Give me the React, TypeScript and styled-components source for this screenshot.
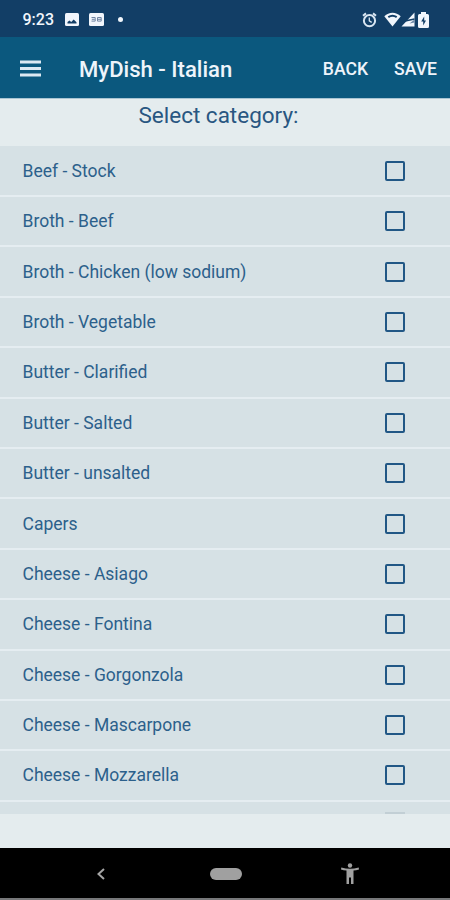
import React from 'react';
import styled, { createGlobalStyle } from 'styled-components';

const GlobalStyle = createGlobalStyle`
  * { box-sizing: border-box; }
  html, body { margin: 0; padding: 0; }
  body { font-family: Roboto, sans-serif; background: #e4ecef; overflow: hidden; }
`;

const Screen = styled.div`
  width: 450px;
  height: 900px;
  display: flex;
  flex-direction: column;
  background: #e4ecee;
  overflow: hidden;
`;

const StatusBar = styled.header`
  flex: 0 0 37px;
  display: flex;
  align-items: center;
  padding: 2px 21px 0 22.5px;
  background: #123e66;
  color: #f1f6fc;
`;

const Clock = styled.span`
  width: 42.5px;
  font-size: 16px;
  font-weight: 500;
  line-height: 20px;
`;

const StatusIcons = styled.div<{ $end?: boolean }>`
  display: flex;
  align-items: center;
  gap: ${(p) => (p.$end ? 0 : 10)}px;
  margin-left: ${(p) => (p.$end ? 'auto' : '0')};
  svg { display: block; }
`;

const IconSlot = styled.span<{ $after: number }>`
  margin-right: ${(p) => p.$after}px;
`;

const Dot = styled.span`
  width: 5px;
  height: 5px;
  margin-left: 4px;
  border-radius: 50%;
  background: #f1f6fc;
`;

const AppBar = styled.nav`
  flex: 0 0 62px;
  display: flex;
  align-items: center;
  padding: 0 13px 0 20px;
  background: #0b587e;
  border-bottom: 1px solid #a9c5d3;
  color: #eef4fb;
`;

const MenuButton = styled.button`
  width: 59px;
  margin-top: 1px;
  padding: 0;
  border: 0;
  background: none;
  svg { display: block; }
`;

const AppTitle = styled.h1`
  flex: 1;
  margin: 3px 0 0;
  font-size: 22.1px;
  font-weight: 500;
  line-height: 28px;
  white-space: nowrap;
`;

const Action = styled.button`
  margin: 3px 0 0 26px;
  padding: 0;
  border: 0;
  background: none;
  color: inherit;
  font: 500 17.6px/24px Roboto, sans-serif;
`;

const Heading = styled.h2`
  flex: 0 0 46.6px;
  margin: 0;
  padding: 2px 13px 0 0;
  text-align: center;
  color: #285681;
  font-size: 22.5px;
  font-weight: 400;
  line-height: 29px;
`;

const List = styled.ul`
  flex: 0 0 668.6px;
  margin: 0;
  padding: 1px 0 0;
  overflow: hidden;
  list-style: none;
  background: #d6e1e5;
`;

const Row = styled.li`
  display: flex;
  align-items: center;
  justify-content: space-between;
  height: 50.4px;
  padding: 0 45px 0 22.5px;
  border-bottom: 2px solid #e5edf1;
`;

const Label = styled.span`
  color: #2c608b;
  font-size: 17.5px;
  line-height: 22px;
`;

const Checkbox = styled.span`
  width: 20px;
  height: 20px;
  border: 2px solid #215785;
  border-radius: 2px;
`;

const PartialRow = styled.li`
  display: flex;
  align-items: flex-end;
  justify-content: flex-end;
  height: 12.4px;
  padding-right: 45px;
`;

const CheckboxEdge = styled.span`
  width: 20px;
  height: 2px;
  background: #c2cfd5;
`;

const Footer = styled.div`
  flex: 1;
`;

const SystemNav = styled.footer`
  flex: 0 0 52.5px;
  display: grid;
  grid-template-columns: 202px 47px 201px;
  align-items: center;
  justify-items: center;
  padding-top: 2px;
  background: #000;
  border-bottom: 2px solid #77787a;
  svg { display: block; }
`;

const HomePill = styled.span`
  width: 32px;
  height: 12px;
  border-radius: 6px;
  background: #a0a0a0;
`;

const items = [
  'Beef - Stock',
  'Broth - Beef',
  'Broth - Chicken (low sodium)',
  'Broth - Vegetable',
  'Butter - Clarified',
  'Butter - Salted',
  'Butter - unsalted',
  'Capers',
  'Cheese - Asiago',
  'Cheese - Fontina',
  'Cheese - Gorgonzola',
  'Cheese - Mascarpone',
  'Cheese - Mozzarella',
];

const MenuIcon = () => (
  <svg width="21" height="17" viewBox="0 0 21 17">
    <path d="M0 2h21M0 8.500h21M0 15h21" stroke="#dce9f3" strokeWidth="2.8" />
  </svg>
);

const PhotoIcon = () => (
  <svg width="14" height="13" viewBox="0 0 14 13">
    <rect width="14" height="13" rx="1.5" fill="#f1f6fc" />
    <path d="M2.5 10.5V9l2-1.5L6.2 9l2.5-2.6 2.8 2.8v1.3z" fill="#123e66" />
  </svg>
);

const CardIcon = () => (
  <svg width="15" height="13" viewBox="0 0 15 13">
    <rect width="15" height="13" rx="1.5" fill="#f1f6fc" />
    <path d="M2.5 4.5h3.7v3.6H2.5M2.8 6.3h3M8.5 4.5h3.7v3.6H8.5zM8.5 6.3h3.7" fill="none" stroke="#6f84a2" strokeWidth="1" />
  </svg>
);

const AlarmIcon = () => (
  <svg width="15" height="16" viewBox="0 0 15 16" fill="none" stroke="#d9e6f2">
    <circle cx="7.5" cy="8.7" r="5.6" strokeWidth="2" />
    <path d="M1 3.8 4 1.4M14 3.8 11 1.4" strokeWidth="2" />
    <path d="M7.3 5.5v3.4l2.4 1.5" strokeWidth="1.3" />
  </svg>
);

const WifiIcon = () => (
  <svg width="17" height="15" viewBox="0 0 17 15">
    <path d="M.3 4.2C5-.5 12-.5 16.7 4.2L8.5 14.5z" fill="#f1f6fc" />
    <path d="M4.3 5.2C7 3.4 10 3.4 12.7 5.2" fill="none" stroke="#123e66" strokeWidth="2" />
  </svg>
);

const SignalIcon = () => (
  <svg width="14" height="15" viewBox="0 0 14 15">
    <path d="M13.5.5v14H.5z" fill="#f1f6fc" />
    <path d="M3 9.2 13.5 7" stroke="#123e66" strokeWidth="1.4" />
    <path d="M13.5 7.5v3l-5 1z" fill="#6d8aa9" />
  </svg>
);

const BatteryIcon = () => (
  <svg width="11" height="16" viewBox="0 0 11 16">
    <path d="M3 0h5v2h1.5A1.5 1.5 0 0 1 11 3.5v11A1.5 1.5 0 0 1 9.5 16h-8A1.5 1.5 0 0 1 0 14.5v-11A1.5 1.5 0 0 1 1.5 2H3z" fill="#f1f6fc" />
    <path d="M6.2 4.5 3.2 9.5h2v4l2.8-5h-1.8z" fill="#123e66" />
  </svg>
);

export default function App() {
  return (
    <Screen>
      <GlobalStyle />
      <StatusBar>
        <Clock>9:23</Clock>
        <StatusIcons>
          <PhotoIcon />
          <CardIcon />
          <Dot />
        </StatusIcons>
        <StatusIcons $end>
          <IconSlot $after={7}>
            <AlarmIcon />
          </IconSlot>
          <WifiIcon />
          <IconSlot $after={3}>
            <SignalIcon />
          </IconSlot>
          <BatteryIcon />
        </StatusIcons>
      </StatusBar>
      <AppBar>
        <MenuButton aria-label="Menu">
          <MenuIcon />
        </MenuButton>
        <AppTitle>MyDish - Italian</AppTitle>
        <Action>BACK</Action>
        <Action>SAVE</Action>
      </AppBar>
      <Heading>Select category:</Heading>
      <List>
        {items.map((item) => (
          <Row key={item}>
            <Label>{item}</Label>
            <Checkbox role="checkbox" aria-checked="false" aria-label={item} />
          </Row>
        ))}
        <PartialRow>
          <CheckboxEdge />
        </PartialRow>
      </List>
      <Footer />
      <SystemNav>
        <svg width="10" height="14" viewBox="0 0 10 14">
          <path d="M8 2 2.5 7 8 12" fill="none" stroke="#a6a6a6" strokeWidth="2" />
        </svg>
        <HomePill />
        <svg width="18" height="22" viewBox="0 0 18 22" fill="#a0a0a0">
          <circle cx="9" cy="2.5" r="2.2" />
          <path d="M.3 4.5Q9 7 17.7 4.5l.3 2q-3 .8-5.500 1v13.500h-2.500v-6.500H8V21H5.500V7.500q-3-.2-5.500-1z" />
        </svg>
      </SystemNav>
    </Screen>
  );
}
